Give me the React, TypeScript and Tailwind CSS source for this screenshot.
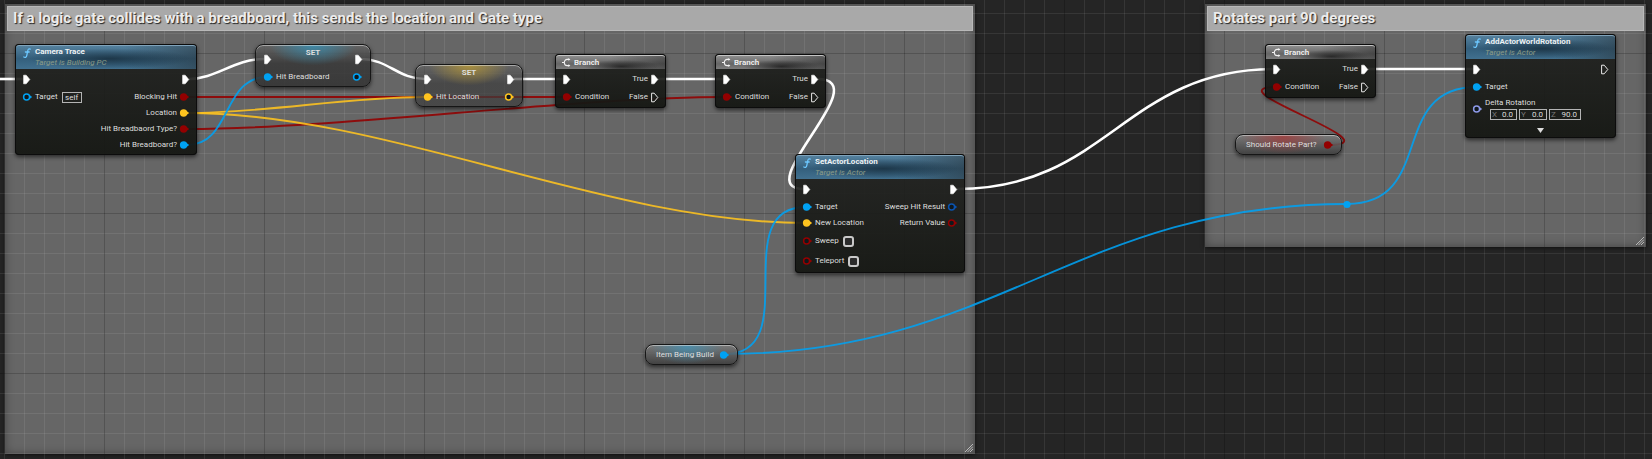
import type { ReactNode } from "react";

const BLUE = "#00a2f3";
const RED = "#930000";
const YELLOW = "#ffc41f";
const NAVY = "#0a53b0";
const LILAC = "#8d99e8";

function Pin({ color, hollow = false }: { color: string; hollow?: boolean }) {
  return (
    <svg className="h-2 w-[9px] shrink-0 overflow-visible" viewBox="0 0 9 8" aria-hidden="true">
      {hollow ? (
        <circle cx="3.6" cy="4" r="3" fill="#10181c" stroke={color} strokeWidth="1.5" />
      ) : (
        <circle cx="3.6" cy="4" r="3.7" fill={color} />
      )}
      <path d="M6.8 2.2L9.2 4L6.8 5.800Z" fill={color} />
    </svg>
  );
}

function ExecPin({ hollow = false }: { hollow?: boolean }) {
  return (
    <svg className="h-[9px] w-[7px] shrink-0 overflow-visible" viewBox="0 0 7 9" aria-hidden="true">
      <path
        d="M0.6 0.2H3.2L6.8 4.5L3.2 8.8H0.6Z"
        fill={hollow ? "none" : "#fff"}
        stroke="#fff"
        strokeWidth={hollow ? 0.9 : 0.6}
        strokeLinejoin="round"
      />
    </svg>
  );
}

function Row({ children, end = false, tall = false }: { children: ReactNode; end?: boolean; tall?: boolean }) {
  return (
    <div className={`flex items-center gap-[3px] whitespace-nowrap ${tall ? "h-5" : "h-4"} ${end ? "justify-end" : ""}`}>
      {children}
    </div>
  );
}

function ExecRow({ children, end = false }: { children: ReactNode; end?: boolean }) {
  return (
    <div className={`mb-px flex h-[18px] items-center gap-[3px] ${end ? "justify-end" : ""}`}>{children}</div>
  );
}

const nodeShell =
  "absolute rounded-[4px] bg-linear-to-b from-[#1f201e]/90 to-[#151713]/95 shadow-[0_0_0_1px_#0c0c0c_inset,0_2px_4px_rgba(0,0,0,0.6)] overflow-hidden";

function FunctionNode({ place, title, target, children }: { place: string; title: string; target: string; children: ReactNode }) {
  return (
    <section className={`${nodeShell} ${place}`}>
      <header className="m-px mb-0 flex h-6 gap-1 rounded-t-[3px] border-t border-[#7fa3bb] bg-[radial-gradient(ellipse_45%_45%_at_52%_55%,rgba(22,42,56,0.75),transparent),linear-gradient(to_right,transparent_60%,rgba(40,50,56,0.5)),linear-gradient(to_bottom,#54809d,#345f7c_55%,#41708f)] pl-[7px]">
        <svg className="mt-[2px] h-[10px] w-2 shrink-0" viewBox="0 0 8 10" fill="none" stroke="#6cc8ff" strokeWidth="1.3" strokeLinecap="round" aria-hidden="true">
          <path d="M7.2 1.1C5.6 0.2 5 1.4 4.7 3L3.8 7.4C3.4 9.3 2.4 9.8 0.8 9M2.4 4H6.2" />
        </svg>
        <div>
          <h2 className="h-[11px] text-[8px] leading-[11px] font-bold text-[#eef2f4]">{title}</h2>
          <p className="text-[8px] leading-[11px] text-[#8c9c88] italic">{target}</p>
        </div>
      </header>
      <div className="px-2 pt-px">{children}</div>
    </section>
  );
}

function BranchNode({ place }: { place: string }) {
  return (
    <section className={`${nodeShell} w-[111px] ${place}`}>
      <header className="m-px mb-0 flex h-[14px] items-center gap-1 rounded-t-[3px] border-t border-[#c4c4c4] bg-[radial-gradient(ellipse_35%_50%_at_60%_80%,rgba(20,20,20,0.75),transparent),linear-gradient(to_right,transparent_50%,rgba(30,30,30,0.45)),linear-gradient(to_bottom,#8c8c8c,#666_60%,#7c7c7c)] pl-1.5">
        <svg className="h-[9px] w-[9px]" viewBox="0 0 9 9" fill="none" stroke="#f2f2f2" strokeWidth="1.1" aria-hidden="true">
          <path d="M0 4.5H2.2M7 1.4H5.200C3.400 1.400 2.300 3 2.300 4.500S3.400 7.600 5.200 7.600H7" />
          <path d="M6.400 0L8.400 1.400L6.400 2.800ZM6.400 6.200L8.400 7.600L6.400 9Z" fill="#f2f2f2" stroke="none" />
        </svg>
        <h2 className="-ml-px text-[8px] leading-[12px] font-bold text-[#ececec]">Branch</h2>
      </header>
      <div className="flex justify-between px-2 pt-px pb-[3px]">
        <div>
          <ExecRow><ExecPin /></ExecRow>
          <Row><Pin color={RED} />Condition</Row>
        </div>
        <div>
          <ExecRow end>True<ExecPin /></ExecRow>
          <Row end>False<ExecPin hollow /></Row>
        </div>
      </div>
    </section>
  );
}

const glassShell =
  "absolute rounded-[8px] border border-[#161616] shadow-[0_1px_0_rgba(235,235,235,0.5)_inset,0_2px_4px_rgba(0,0,0,0.6)]";

function SetNode({ place, label, color }: { place: string; label: string; color: string }) {
  return (
    <section className={`${glassShell} px-2 pb-px ${place}`}>
      <div className="mb-px flex h-[23px] items-end justify-between">
        <div className="flex h-[18px] items-center"><ExecPin /></div>
        <h2 className="self-start text-[8px] leading-[16px] font-bold">SET</h2>
        <div className="flex h-[18px] items-center"><ExecPin /></div>
      </div>
      <div className="flex justify-between">
        <Row><Pin color={color} />{label}</Row>
        <Row><Pin color={color} hollow /></Row>
      </div>
    </section>
  );
}

function VariableNode({ place, label, color }: { place: string; label: string; color: string }) {
  return (
    <section className={`${glassShell} flex h-[21px] items-center justify-between pr-2 pl-2.5 whitespace-nowrap ${place}`}>
      {label}
      <Pin color={color} />
    </section>
  );
}

function CommentBox({ place, title }: { place: string; title: string }) {
  return (
    <section className={`absolute bg-[#666] p-0.5 shadow-[0_0_10px_rgba(0,0,0,0.35)_inset,0_1px_4px_rgba(0,0,0,0.6)] ${place}`}>
      <h1 className="relative z-10 h-[25px] border border-[#b9b9b9] bg-[#a9a9a9] px-[5px] text-[15px] leading-[23px] font-bold whitespace-nowrap text-[#ececec] [text-shadow:1px_1px_1px_#222]">
        {title}
      </h1>
      <svg className="absolute right-0.5 bottom-0.5 h-2 w-2" viewBox="0 0 8 8" stroke="#c4c4c4" strokeWidth="0.9" aria-hidden="true">
        <path d="M0 8L8 0M2.5 8L8 2.5M5 8L8 5" />
      </svg>
    </section>
  );
}

const execWires = [
  "M0 79H23",
  "M189 79C216 79 234 59 264 59",
  "M361 59C388 59 398 79 425 79",
  "M514 79H565",
  "M657 79H725",
  "M817 79C879 79 747 189 804 189",
  "M957 189C1107 189 1125 69 1275 69",
  "M1368 69H1474",
];

const dataWires = [
  { d: "M187 97H566", color: RED },
  { d: "M187 129C337 129 575 97 726 97", color: RED },
  { d: "M187 113C267 113 345 97 425 97", color: YELLOW },
  { d: "M187 113C387 113 606 223 806 223", color: YELLOW },
  { d: "M187 145C232 145 222 77 267 77", color: BLUE },
  { d: "M725 354C805 354 726 207 806 207", color: BLUE },
  { d: "M725 354C995 354 1077 204 1347 204", color: BLUE },
  { d: "M1347 204C1437 204 1387 87 1477 87", color: BLUE },
  { d: "M1327 145C1401 145 1208 87 1277 87", color: RED },
];

function AxisField({ axis, value, width }: { axis: string; value: string; width: string }) {
  return (
    <label className={`flex h-[11px] items-center border border-[#b4b4b4] px-px text-[#777] ${width}`}>
      {axis}
      <input defaultValue={value} className="w-0 min-w-0 flex-1 bg-transparent pr-0.5 text-right leading-[9px] text-[#dcdcdc] outline-none" />
    </label>
  );
}

function CheckRow({ label }: { label: string }) {
  return (
    <Row tall>
      <Pin color={RED} hollow />
      <label className="flex items-center gap-1">
        {label}
        <input type="checkbox" className="h-[11px] w-[11px] appearance-none rounded-[3px] border-2 border-[#c9c9c9] bg-[#2b2b2b] checked:bg-[#c9c9c9]" />
      </label>
    </Row>
  );
}

export default function App() {
  return (
    <main className="relative min-h-screen w-full overflow-hidden bg-[#252525] font-['Roboto',sans-serif] text-[8px] leading-[12px] text-[#dedede]">
      <div className="absolute inset-0 bg-[linear-gradient(to_right,rgba(0,0,0,0.4)_1px,transparent_1px),linear-gradient(to_bottom,rgba(0,0,0,0.4)_1px,transparent_1px)] bg-[size:160px_160px] bg-[position:104px_53px]" />

      <CommentBox place="left-[5px] top-1 w-[970px] h-[450px]" title="If a logic gate collides with a breadboard, this sends the location and Gate type" />
      <CommentBox place="left-[1205px] top-1 w-[441px] h-[243px]" title="Rotates part 90 degrees" />

      <div className="pointer-events-none absolute inset-0 bg-[linear-gradient(to_right,rgba(0,0,0,0.27)_1px,transparent_1px),linear-gradient(to_bottom,rgba(0,0,0,0.27)_1px,transparent_1px),linear-gradient(to_right,rgba(255,255,255,0.08)_1px,transparent_1px),linear-gradient(to_bottom,rgba(255,255,255,0.08)_1px,transparent_1px)] bg-[size:160px_160px,160px_160px,20px_20px,20px_20px] bg-[position:104px_53px,104px_53px,4px_13px,4px_13px]" />

      <svg className="pointer-events-none absolute inset-0 h-full w-full" fill="none" aria-hidden="true">
        {dataWires.map((w) => (
          <path key={w.d} d={w.d} stroke={w.color} strokeWidth="1.9" opacity="0.88" />
        ))}
        {execWires.map((d) => (
          <path key={d} d={d} stroke="#fff" strokeWidth="2.6" />
        ))}
        <circle cx="1347" cy="204.500" r="3.600" fill={BLUE} />
      </svg>

      <FunctionNode place="left-[15px] top-11 w-[182px] pb-[2px]" title="Camera Trace" target="Target is Building PC">
        <div className="flex justify-between">
          <div>
            <ExecRow><ExecPin /></ExecRow>
            <Row>
              <Pin color={BLUE} hollow />
              <label className="flex items-center gap-1">
                Target
                <input defaultValue="self" className="h-[11px] w-5 border border-[#b4b4b4] bg-transparent text-center leading-[9px] outline-none" />
              </label>
            </Row>
          </div>
          <div>
            <ExecRow end><ExecPin /></ExecRow>
            <Row end>Blocking Hit<Pin color={RED} /></Row>
            <Row end>Location<Pin color={YELLOW} /></Row>
            <Row end>Hit Breadbaord Type?<Pin color={RED} /></Row>
            <Row end>Hit Breadboard?<Pin color={BLUE} /></Row>
          </div>
        </div>
      </FunctionNode>

      <SetNode
        place="left-[255px] top-11 w-[116px] bg-[radial-gradient(ellipse_38%_50%_at_50%_0%,rgba(50,150,190,0.75),transparent),linear-gradient(to_bottom,rgba(100,100,100,0.85),rgba(55,55,55,0.85)_45%,rgba(50,50,50,0.85))]"
        label="Hit Breadboard"
        color={BLUE}
      />
      <SetNode
        place="left-[415px] top-16 w-[108px] bg-[radial-gradient(ellipse_38%_50%_at_50%_0%,rgba(195,160,50,0.75),transparent),linear-gradient(to_bottom,rgba(100,100,100,0.7),rgba(60,60,60,0.7)_45%,rgba(60,60,60,0.7))]"
        label="Hit Location"
        color={YELLOW}
      />

      <BranchNode place="left-[555px] top-[54px]" />
      <BranchNode place="left-[715px] top-[54px]" />

      <FunctionNode place="left-[795px] top-[154px] w-[170px] pb-[2px]" title="SetActorLocation" target="Target is Actor">
        <div className="flex justify-between">
          <div>
            <ExecRow><ExecPin /></ExecRow>
            <Row><Pin color={BLUE} />Target</Row>
            <Row><Pin color={YELLOW} />New Location</Row>
            <CheckRow label="Sweep" />
            <CheckRow label="Teleport" />
          </div>
          <div>
            <ExecRow end><ExecPin /></ExecRow>
            <Row end>Sweep Hit Result<Pin color={NAVY} hollow /></Row>
            <Row end>Return Value<Pin color={RED} hollow /></Row>
          </div>
        </div>
      </FunctionNode>

      <VariableNode
        place="left-[645px] top-[344px] w-[93px] bg-[radial-gradient(ellipse_40%_90%_at_45%_10%,rgba(60,150,190,0.7),transparent),linear-gradient(to_bottom,rgba(125,125,125,0.85),rgba(60,60,60,0.85))]"
        label="Item Being Build"
        color={BLUE}
      />

      <BranchNode place="left-[1265px] top-11" />
      <VariableNode
        place="left-[1235px] top-[134px] w-[107px] bg-[radial-gradient(ellipse_40%_90%_at_45%_10%,rgba(170,50,50,0.7),transparent),linear-gradient(to_bottom,rgba(125,125,125,0.85),rgba(60,60,60,0.85))]"
        label="Should Rotate Part?"
        color={RED}
      />

      <FunctionNode place="left-[1465px] top-[34px] w-[151px] pb-[2px]" title="AddActorWorldRotation" target="Target is Actor">
        <div className="flex justify-between">
          <ExecRow><ExecPin /></ExecRow>
          <ExecRow end><ExecPin hollow /></ExecRow>
        </div>
        <Row><Pin color={BLUE} />Target</Row>
        <div className="mt-[3px] flex items-center gap-[3px]">
          <Pin color={LILAC} hollow />
          <div>
            <div className="leading-[10px]">Delta Rotation</div>
            <div className="ml-[5px] flex gap-0.5 pt-px">
              <AxisField axis="X" value="0.0" width="w-[27px]" />
              <AxisField axis="Y" value="0.0" width="w-[28px]" />
              <AxisField axis="Z" value="90.0" width="w-8" />
            </div>
          </div>
        </div>
        <button type="button" aria-label="Show advanced pins" className="mx-auto mt-1 flex h-3 w-4 items-center justify-center">
          <svg className="h-[5px] w-[7px]" viewBox="0 0 7 5" aria-hidden="true">
            <path d="M0 0H7L3.500 5Z" fill="#dedede" />
          </svg>
        </button>
      </FunctionNode>
    </main>
  );
}
